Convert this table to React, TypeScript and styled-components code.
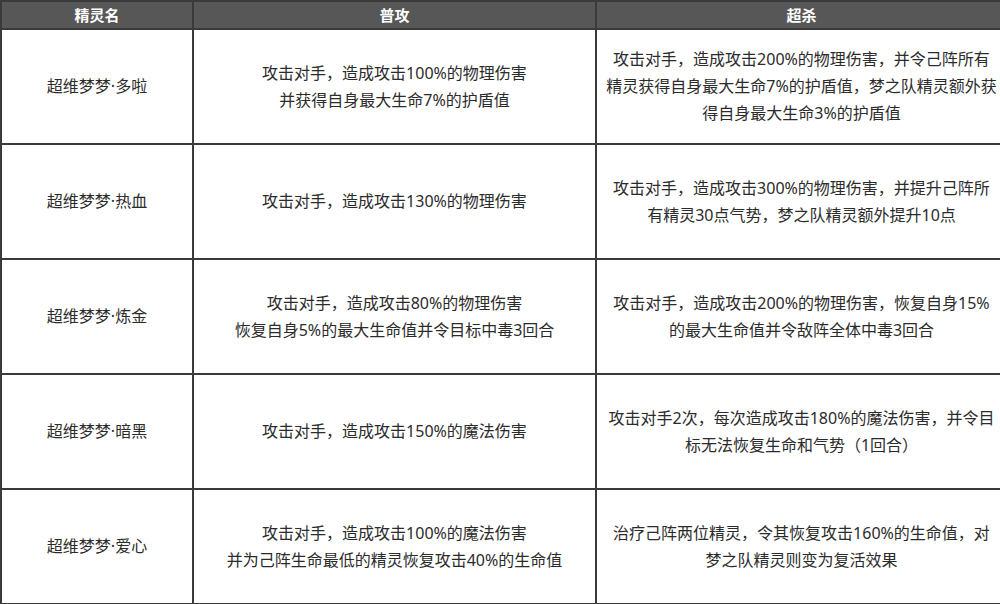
import styled, { createGlobalStyle } from "styled-components";

const GlobalStyle = createGlobalStyle`
  html, body {
    margin: 0;
    padding: 0;
    background: #ffffff;
  }
  body {
    font-family: "Noto Sans", "Noto Sans CJK SC", sans-serif;
  }
`;

const Table = styled.table`
  width: 1000px;
  height: 604px;
  border-collapse: collapse;
  table-layout: fixed;
  border: 2px solid #3a3a3a;
`;

const HeadCell = styled.th<{ $width: number }>`
  width: ${({ $width }) => $width}px;
  height: 26px;
  padding: 0;
  background: #575757;
  color: #ffffff;
  font-size: 15px;
  font-weight: 700;
  line-height: 26px;
  text-align: center;
  border: 2px solid #3a3a3a;
`;

const Row = styled.tr`
  height: 115px;
`;

const Cell = styled.td`
  padding: 0;
  color: #2b2b2b;
  font-size: 16px;
  line-height: 27px;
  text-align: center;
  vertical-align: middle;
  border: 2px solid #3a3a3a;
`;

type Skill = {
  name: string;
  normal: string[];
  ultimate: string[];
};

const SKILLS: Skill[] = [
  {
    name: "超维梦梦·多啦",
    normal: ["攻击对手，造成攻击100%的物理伤害", "并获得自身最大生命7%的护盾值"],
    ultimate: [
      "攻击对手，造成攻击200%的物理伤害，并令己阵所有",
      "精灵获得自身最大生命7%的护盾值，梦之队精灵额外获",
      "得自身最大生命3%的护盾值",
    ],
  },
  {
    name: "超维梦梦·热血",
    normal: ["攻击对手，造成攻击130%的物理伤害"],
    ultimate: [
      "攻击对手，造成攻击300%的物理伤害，并提升己阵所",
      "有精灵30点气势，梦之队精灵额外提升10点",
    ],
  },
  {
    name: "超维梦梦·炼金",
    normal: ["攻击对手，造成攻击80%的物理伤害", "恢复自身5%的最大生命值并令目标中毒3回合"],
    ultimate: [
      "攻击对手，造成攻击200%的物理伤害，恢复自身15%",
      "的最大生命值并令敌阵全体中毒3回合",
    ],
  },
  {
    name: "超维梦梦·暗黑",
    normal: ["攻击对手，造成攻击150%的魔法伤害"],
    ultimate: [
      "攻击对手2次，每次造成攻击180%的魔法伤害，并令目",
      "标无法恢复生命和气势（1回合）",
    ],
  },
  {
    name: "超维梦梦·爱心",
    normal: ["攻击对手，造成攻击100%的魔法伤害", "并为己阵生命最低的精灵恢复攻击40%的生命值"],
    ultimate: [
      "治疗己阵两位精灵，令其恢复攻击160%的生命值，对",
      "梦之队精灵则变为复活效果",
    ],
  },
];

function Lines({ lines }: { lines: string[] }) {
  return (
    <>
      {lines.map((line, i) => (
        <div key={i}>{line}</div>
      ))}
    </>
  );
}

export default function App() {
  return (
    <>
      <GlobalStyle />
      <Table>
        <thead>
          <tr>
            <HeadCell $width={190}>精灵名</HeadCell>
            <HeadCell $width={401}>普攻</HeadCell>
            <HeadCell $width={409}>超杀</HeadCell>
          </tr>
        </thead>
        <tbody>
          {SKILLS.map((s) => (
            <Row key={s.name}>
              <Cell>{s.name}</Cell>
              <Cell>
                <Lines lines={s.normal} />
              </Cell>
              <Cell>
                <Lines lines={s.ultimate} />
              </Cell>
            </Row>
          ))}
        </tbody>
      </Table>
    </>
  );
}
